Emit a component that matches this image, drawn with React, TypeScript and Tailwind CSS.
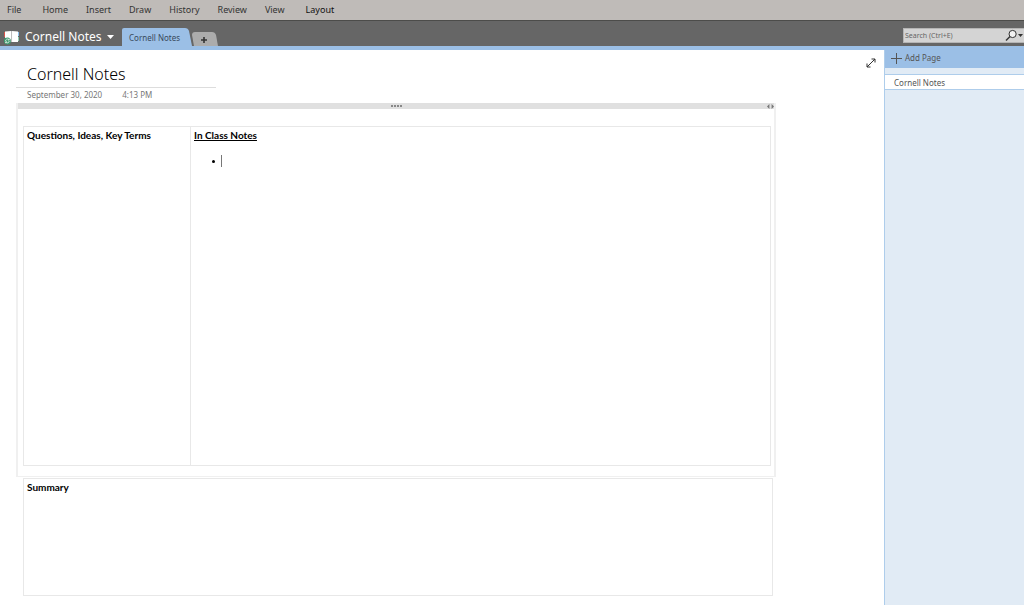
import React, { useState } from 'react';

const menuItems = ['File', 'Home', 'Insert', 'Draw', 'History', 'Review', 'View', 'Layout'];

const NotebookIcon: React.FC = () => (
  <svg className="h-4 w-4 shrink-0" viewBox="0 0 16 16" aria-hidden="true">
    <rect x="0" y="3" width="1.4" height="5" fill="#d9534a" />
    <path d="M1 2.5 L7.4 2 L7.4 13 L1 13 Z" fill="#ffffff" />
    <path d="M7.8 2 L14 2.5 L14 13 L7.8 13 Z" fill="#ffffff" />
    <path d="M7.6 2 V13" stroke="#c9c9c9" strokeWidth="0.5" />
    <rect x="14" y="3" width="1" height="4" fill="#8fc1ef" />
    <rect x="14" y="8" width="1" height="4" fill="#8fd0b0" />
    <circle cx="3.4" cy="12" r="3.5" fill="#3f9a70" />
    <path
      d="M1.6 12 a1.9 1.9 0 0 1 3.2 -1.5 M5.2 9.6 v1.4 h-1.4 M5.2 11.9 a1.9 1.9 0 0 1 -3.2 1.5 M1.6 14.2 v-1.4 h1.4"
      fill="none"
      stroke="#ffffff"
      strokeWidth="0.7"
    />
  </svg>
);

const MenuBar: React.FC = () => (
  <nav className="flex h-5 items-center bg-[#bfbbb8] text-[9px] leading-5 text-[#333333]">
    {menuItems.map((item) => (
      <button
        key={item}
        type="button"
        className={
          item === 'Layout'
            ? 'px-[10px] text-[#111111]'
            : item === 'File'
              ? 'pr-[14px] pl-[7px]'
              : 'pr-[11px] pl-[7px]'
        }
      >
        {item}
      </button>
    ))}
  </nav>
);

const TabBar: React.FC = () => {
  const [search, setSearch] = useState('');

  return (
    <header className="flex h-[30px] items-end border-t border-b-4 border-t-[#4c4c4a] border-b-[#9bbfe6] bg-[#666666]">
      <button type="button" className="flex h-[18px] items-center pl-1 text-xs leading-4 text-white">
        <NotebookIcon />
        <span className="ml-[5px]">Cornell Notes</span>
        <svg className="ml-[5px] h-1 w-[7px]" viewBox="0 0 7 4" aria-hidden="true">
          <path d="M0 0 H7 L3.5 4 Z" fill="#ffffff" />
        </svg>
      </button>
      <button type="button" className="relative ml-2 h-[18px] w-[70px] pt-px pr-1 text-[8px] leading-4 text-[#39495c]">
        <svg className="absolute inset-0 h-full w-full" viewBox="0 0 70 18" preserveAspectRatio="none" aria-hidden="true">
          <path d="M0 18 V2 Q0 0 2 0 H63 Q66 0 67 3 L70 18 Z" fill="#9bbfe6" />
        </svg>
        <span className="relative">Cornell Notes</span>
      </button>
      <button type="button" aria-label="New section" className="h-[14px] w-[26px]">
        <svg className="h-[14px] w-[26px]" viewBox="0 0 26 14" aria-hidden="true">
          <path d="M2 14 L0 3 Q0 0 3 0 H20 Q23 0 24 3 L26 14 Z" fill="#acacac" />
          <path d="M12 5 V11 M9 8 H15" stroke="#333333" strokeWidth="1.6" />
        </svg>
      </button>
      <div className="mb-[3px] ml-auto flex h-[15px] w-[121px] items-center border border-r-0 border-[#b5b5b5] bg-[#d4d4d4]">
        <input
          type="text"
          aria-label="Search"
          placeholder="Search (Ctrl+E)"
          value={search}
          onChange={(e) => setSearch(e.target.value)}
          className="min-w-0 flex-1 pt-px pl-px text-[7px] outline-none placeholder:text-[#666666]"
        />
        <button type="button" aria-label="Search notes">
          <svg className="h-[13px] w-[19px]" viewBox="0 0 19 13" aria-hidden="true">
            <circle cx="7.6" cy="5" r="3.6" fill="#f2f2f2" stroke="#333333" />
            <path d="M5 7.6 L1 11.6" stroke="#333333" strokeWidth="1.4" />
            <path d="M13 5 H18 L15.5 8 Z" fill="#333333" />
          </svg>
        </button>
      </div>
    </header>
  );
};

const NoteContainer: React.FC = () => (
  <section className="border-x-2 border-b border-[#f0f0f0] pb-[10px]">
    <div className="grid h-[6px] grid-cols-3 items-center bg-[#e0e0e0]">
      <svg className="col-start-2 h-[2px] w-[11px] justify-self-center" viewBox="0 0 11 2" aria-hidden="true">
        <path d="M0 1 H11" stroke="#888888" strokeWidth="2" strokeDasharray="2 1" />
      </svg>
      <svg className="h-[5px] w-[7px] justify-self-end" viewBox="0 0 7 5" aria-hidden="true">
        <path d="M2.4 0 V5 L0 2.5 Z M4.6 0 V5 L7 2.5 Z" fill="#777777" />
      </svg>
    </div>
    <table className="mt-[17px] ml-[5px] w-[748px] table-fixed border-collapse font-['Lato',sans-serif] text-[10px]">
      <tbody>
        <tr className="h-[339px] align-top">
          <td className="w-[167px] border border-[#e8e8e8] px-[3px] leading-4 font-bold">
            Questions, Ideas, Key Terms
          </td>
          <td className="border border-[#e8e8e8] px-[3px] leading-4">
            <p className="font-bold underline">In Class Notes</p>
            <ul className="mt-3 pl-[18px]">
              <li className="flex items-center gap-[6px]">
                <span className="h-[3px] w-[3px] rounded-full bg-black" />
                <span className="h-3 w-px bg-[#777777]" />
              </li>
            </ul>
          </td>
        </tr>
      </tbody>
    </table>
  </section>
);

const PageList: React.FC = () => (
  <aside className="w-[140px] shrink-0 border-l border-[#aecdeb] bg-[#e1ebf5] text-[8px] text-[#555555]">
    <button type="button" className="flex h-[18px] w-full items-center bg-[#9bbfe6] pb-[2px] pl-[6px]">
      <svg className="mr-[3px] h-[11px] w-[11px]" viewBox="0 0 11 11" aria-hidden="true">
        <path d="M5.5 0 V11 M0 5.5 H11" stroke="#555555" />
      </svg>
      Add Page
    </button>
    <a href="#" className="mt-[6px] block h-4 border-y border-[#aecdeb] bg-white pl-[9px] leading-4">
      Cornell Notes
    </a>
  </aside>
);

const App: React.FC = () => (
  <div className="flex min-h-screen flex-col bg-white font-['Noto_Sans',sans-serif]">
    <MenuBar />
    <TabBar />
    <div className="flex flex-1">
      <main className="min-w-0 flex-1 pl-4">
        <div className="flex items-start justify-between">
          <div className="w-[200px]">
            <h1 className="border-b border-[#dddddd] pt-3 pb-[1px] pl-[11px] text-base leading-6 font-light">
              Cornell Notes
            </h1>
            <p className="flex h-[15px] gap-5 pl-[11px] text-[8px] leading-[14px] text-[#777777]">
              <span>September 30, 2020</span>
              <span>4:13 PM</span>
            </p>
          </div>
          <button type="button" aria-label="Full page view" className="mt-2 mr-2">
            <svg className="h-[10px] w-[10px]" viewBox="0 0 10 10" aria-hidden="true">
              <path d="M1 9 L9 1 M5.5 1 H9 V4.5 M1 5.5 V9 H4.5" fill="none" stroke="#333333" />
            </svg>
          </button>
        </div>
        <div className="max-w-[760px]">
          <NoteContainer />
          <section className="mt-px mr-[3px] ml-[7px] h-[118px] border border-[#e8e8e8] px-[3px]">
            <h2 className="font-['Lato',sans-serif] text-[10px] leading-4 font-bold">Summary</h2>
          </section>
        </div>
      </main>
      <PageList />
    </div>
  </div>
);

export default App;
